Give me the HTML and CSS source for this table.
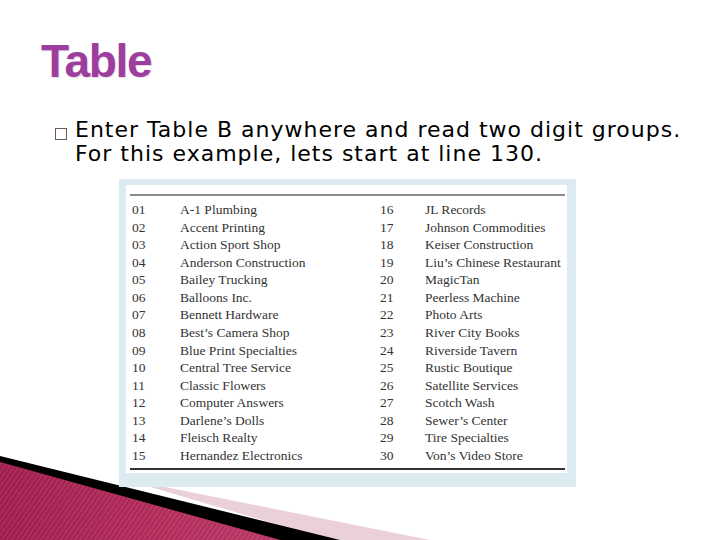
FILE: index.html
```html
<!DOCTYPE html>
<html>
<head>
<meta charset="utf-8">
<link rel="stylesheet" href="styles.css">
</head>
<body>
<div class="slide">
  <svg class="deco" width="440" height="90" viewBox="0 450 440 90">
    <defs>
      <linearGradient id="red" x1="0" y1="0" x2="1" y2="0">
        <stop offset="0" stop-color="#8a0f3e"/>
        <stop offset="0.55" stop-color="#b8305f"/>
        <stop offset="1" stop-color="#c8507a"/>
      </linearGradient>
      <pattern id="stripes" width="4" height="4" patternUnits="userSpaceOnUse" patternTransform="rotate(35)">
        <rect width="4" height="4" fill="url(#red)"/>
        <rect width="1" height="4" fill="#ffffff" opacity="0.08"/>
      </pattern>
    </defs>
    <polygon points="120,478 430,540 330,540" fill="#ead0d8"/>
    <polygon points="0,456 340,540 0,540" fill="#000"/>
    <polygon points="0,462 280,540 0,540" fill="url(#red)"/>
    <polygon points="0,462 280,540 0,540" fill="url(#stripes)" opacity="0.6"/>
  </svg>
  <h1 class="title">Table</h1>
  <div class="bullet">
    <span class="box"></span>
    <p class="btext">Enter Table B anywhere and read two digit groups. For this example, lets start at line 130.</p>
  </div>
  <div class="figure">
    <div class="sheet">
      <div class="rule top"></div>
      <div class="grid">
        <span>01</span><span>A-1 Plumbing</span><span>16</span><span>JL Records</span>
        <span>02</span><span>Accent Printing</span><span>17</span><span>Johnson Commodities</span>
        <span>03</span><span>Action Sport Shop</span><span>18</span><span>Keiser Construction</span>
        <span>04</span><span>Anderson Construction</span><span>19</span><span>Liu’s Chinese Restaurant</span>
        <span>05</span><span>Bailey Trucking</span><span>20</span><span>MagicTan</span>
        <span>06</span><span>Balloons Inc.</span><span>21</span><span>Peerless Machine</span>
        <span>07</span><span>Bennett Hardware</span><span>22</span><span>Photo Arts</span>
        <span>08</span><span>Best’s Camera Shop</span><span>23</span><span>River City Books</span>
        <span>09</span><span>Blue Print Specialties</span><span>24</span><span>Riverside Tavern</span>
        <span>10</span><span>Central Tree Service</span><span>25</span><span>Rustic Boutique</span>
        <span>11</span><span>Classic Flowers</span><span>26</span><span>Satellite Services</span>
        <span>12</span><span>Computer Answers</span><span>27</span><span>Scotch Wash</span>
        <span>13</span><span>Darlene’s Dolls</span><span>28</span><span>Sewer’s Center</span>
        <span>14</span><span>Fleisch Realty</span><span>29</span><span>Tire Specialties</span>
        <span>15</span><span>Hernandez Electronics</span><span>30</span><span>Von’s Video Store</span>
      </div>
      <div class="rule bottom"></div>
    </div>
  </div>
</div>
</body>
</html>
```
FILE: styles.css
```css
html, body {
  margin: 0;
  padding: 0;
  background: #fff;
}
.slide {
  position: relative;
  width: 720px;
  height: 540px;
  overflow: hidden;
  background: #fff;
}
.deco {
  position: absolute;
  left: 0;
  bottom: 0;
  z-index: 0;
}
.title {
  position: relative;
  z-index: 1;
  margin: 0;
  padding: 38px 0 0 41px;
  font-family: "Liberation Sans", Arial, sans-serif;
  font-weight: bold;
  font-size: 46px;
  line-height: 46px;
  letter-spacing: -1.3px;
  color: #9d3e9e;
  text-shadow: 1px 1px 1px #e6d6e6;
}
.bullet {
  position: relative;
  z-index: 1;
  display: flex;
  align-items: flex-start;
  margin: 34px 0 0 55px;
}
.box {
  flex: none;
  width: 10px;
  height: 10px;
  border: 1px solid #6e5a5a;
  margin: 10px 8px 0 0;
}
.btext {
  margin: 0;
  width: 630px;
  font-family: "DejaVu Sans", Verdana, sans-serif;
  font-size: 22px;
  line-height: 24px;
  letter-spacing: 1px;
  color: #000;
}
.figure {
  position: relative;
  z-index: 1;
  margin: 13px 0 0 119px;
  width: 457px;
  padding: 6px 9px 14px 7px;
  box-sizing: border-box;
  background: #dcebf1;
}
.sheet {
  background: #fff;
  padding: 9px 2px 3px 4px;
}
.rule.top {
  height: 2px;
  background: #8a8a8a;
}
.rule.bottom {
  height: 1.5px;
  background: #333;
  margin-top: 4px;
}
.grid {
  display: grid;
  grid-template-columns: 48px 200px 45px 1fr;
  grid-auto-rows: 17.57px;
  padding: 5px 0 0 2px;
  font-family: "Liberation Serif", "Times New Roman", serif;
  font-size: 13.5px;
  line-height: 17.57px;
  color: #333;
  white-space: nowrap;
}
```
